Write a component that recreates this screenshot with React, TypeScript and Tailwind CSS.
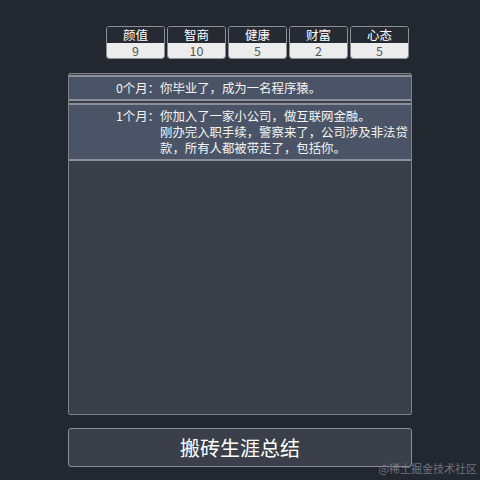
import React from 'react';

const stats = [
  { name: '颜值', value: 9 },
  { name: '智商', value: 10 },
  { name: '健康', value: 5 },
  { name: '财富', value: 2 },
  { name: '心态', value: 5 },
];

const events = [
  { month: '0个月：', text: ['你毕业了，成为一名程序猿。'] },
  {
    month: '1个月：',
    text: ['你加入了一家小公司，做互联网金融。', '刚办完入职手续，警察来了，公司涉及非法贷款，所有人都被带走了，包括你。'],
  },
];

export default function App() {
  return (
    <div
      className="w-[480px] h-[480px] bg-[#232730] relative overflow-hidden"
      style={{ fontFamily: '"Noto Sans CJK SC", "Noto Sans", sans-serif' }}
    >
      {/* Stats */}
      <div className="flex gap-[2px] pl-[106px] pt-[26px]">
        {stats.map((s) => (
          <div
            key={s.name}
            className="w-[59px] h-[33px] rounded-[3px] border border-[#8c9099] overflow-hidden flex flex-col"
          >
            <div className="h-[16px] bg-[#262a33] text-white text-[12.5px] leading-[16px] text-center">{s.name}</div>
            <div className="flex-1 bg-[#ececec] text-[#555] text-[12.5px] leading-[15px] text-center">{s.value}</div>
          </div>
        ))}
      </div>

      {/* Log panel */}
      <div className="ml-[68px] mt-[14px] w-[344px] h-[342px] bg-[#3b3f49] border border-[#7d818a] rounded-[2px] pt-[1px] flex flex-col gap-[2px]">
        {events.map((e) => (
          <div
            key={e.month}
            className="flex bg-[#4b5466] border-y-2 border-[#8a8f99] text-[#f4f4f4] text-[12.4px] leading-[16px] py-[3px]"
          >
            <div className="w-[91px] shrink-0 text-right">{e.month}</div>
            <div className="w-[250px]">
              {e.text.map((t) => (
                <div key={t}>{t}</div>
              ))}
            </div>
          </div>
        ))}
      </div>

      {/* Summary button */}
      <button className="ml-[68px] mt-[13px] w-[344px] h-[39px] bg-[#3b3f49] border border-[#8a8e97] rounded-[3px] text-white text-[20px] leading-[37px] text-center">
        搬砖生涯总结
      </button>

      <div className="absolute right-[3px] bottom-[5px] text-[11px] leading-[13px] text-[#6e737c]">
        @稀土掘金技术社区
      </div>
    </div>
  );
}
